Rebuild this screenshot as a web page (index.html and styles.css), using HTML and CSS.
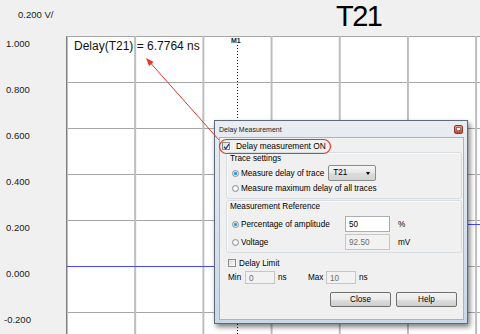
FILE: index.html
```html
<!DOCTYPE html>
<html lang="en">
<head>
<meta charset="UTF-8">
<meta name="viewport" content="width=device-width, initial-scale=1.0">
<title>Delay Measurement</title>
<link rel="stylesheet" href="styles.css">
</head>
<body>
<div id="scope">
  <div class="vdiv">0.200 V/</div>
  <div class="trace-name">T21</div>
  <div class="axis">
    <span>1.000</span>
    <span>0.800</span>
    <span>0.600</span>
    <span>0.400</span>
    <span>0.200</span>
    <span>0.000</span>
    <span class="neg">-0.200</span>
  </div>
  <div class="plot">
    <svg class="traces" width="414" height="298">
      <path d="M0 230.5 H300 V188.5 H414" stroke="#4646ff" fill="none"/>
      <line x1="170.5" y1="9" x2="170.5" y2="298" stroke="#111" stroke-dasharray="1 2"/>
    </svg>
    <span class="marker">M1</span>
    <span class="readout">Delay(T21) = 6.7764 ns</span>
  </div>
</div>

<div class="dialog">
  <div class="dialog-title">
    <span>Delay Measurement</span>
    <span class="close-btn"><span></span></span>
  </div>
  <div class="dialog-body">
    <div class="check-row main-check">
      <span class="checkbox">
        <svg width="7" height="7"><path d="M1 3.8 L2.8 5.8 L6 1" stroke="#22357a" stroke-width="1.3" fill="none"/></svg>
      </span>
      Delay measurement ON
    </div>

    <div class="group group-trace">
      <div class="group-label">Trace settings</div>
      <div class="opt-row tall">
        <span class="radio on"></span>
        <span>Measure delay of trace</span>
        <span class="select">T21<span class="caret"></span></span>
      </div>
      <div class="opt-row">
        <span class="radio"></span>
        <span>Measure maximum delay of all traces</span>
      </div>
    </div>

    <div class="group group-ref">
      <div class="group-label">Measurement Reference</div>
      <div class="opt-row tall">
        <span class="radio on"></span>
        <span class="opt-label">Percentage of amplitude</span>
        <span class="field">50</span>
        <span class="unit">%</span>
      </div>
      <div class="opt-row tall second">
        <span class="radio"></span>
        <span class="opt-label">Voltage</span>
        <span class="field off">92.50</span>
        <span class="unit">mV</span>
      </div>
    </div>

    <div class="check-row limit-check">
      <span class="checkbox"></span>
      Delay Limit
    </div>
    <div class="limit-row">
      <span class="lbl-min">Min</span>
      <span class="field off small">0</span>
      <span class="ns">ns</span>
      <span class="lbl-max">Max</span>
      <span class="field off small">10</span>
      <span class="ns">ns</span>
    </div>

    <div class="buttons">
      <span class="btn">Close</span>
      <span class="btn">Help</span>
    </div>
  </div>
</div>

<svg class="callout" width="480" height="334">
  <line x1="219" y1="140" x2="151" y2="63.5" stroke="#e4362c" stroke-width="1"/>
  <polygon points="146,58 153.6,61.9 149.1,66" fill="#e4362c"/>
  <rect x="219.5" y="139.5" width="111" height="14" rx="7" fill="none" stroke="#e4362c" stroke-width="1.2"/>
</svg>
</body>
</html>
```

FILE: styles.css
```css
html, body {
  margin: 0;
  width: 480px;
  height: 334px;
  overflow: hidden;
  background-color: #f0f0f0;
  font-family: "Liberation Sans", Arial, sans-serif;
  color: #1a1a1a;
}
body {
  position: relative;
}

/* scope window */
#scope {
  display: grid;
  grid-template-columns: 66px 1fr;
  grid-template-rows: 36px minmax(0, 1fr);
  height: 334px;
  overflow: hidden;
}
.vdiv {
  font-size: 9.5px;
  line-height: 12px;
  padding: 9px 0 0 18px;
}
.trace-name {
  font-size: 29px;
  line-height: 32px;
  letter-spacing: -1.5px;
  padding-left: 270px;
  color: #000;
}
.axis {
  display: flex;
  flex-direction: column;
  overflow: hidden;
  font-size: 9.5px;
  line-height: 12px;
}
.axis span {
  flex: none;
  height: 46px;
  box-sizing: border-box;
  padding: 2px 0 0 6px;
}
.axis span.neg {
  height: 22px;
  padding-left: 4px;
}
.plot {
  position: relative;
  overflow: hidden;
  background-color: #fff;
  background-image:
    linear-gradient(to right, #bdbdbd 2px, transparent 2px),
    linear-gradient(to bottom, #a6a6a6 1px, transparent 1px);
  background-size: 68.2px 100%, 100% 46px;
  background-position: -1px 0, 0 0;
  border-left: 1px solid #7f7f7f;
}
.traces {
  position: absolute;
  left: 0;
  top: 0;
}
.marker {
  position: absolute;
  left: 164px;
  top: 1px;
  font-size: 7px;
  line-height: 7px;
  font-weight: bold;
}
.readout {
  position: absolute;
  left: 7px;
  top: 3px;
  font-size: 12px;
  line-height: 14px;
  color: #111;
}

/* dialog */
.dialog {
  position: absolute;
  left: 214px;
  top: 120px;
  width: 254px;
  height: 204px;
  box-sizing: border-box;
  padding: 0 3px 3px 4px;
  border: 1px solid #5e6a78;
  background: linear-gradient(#e9edf2, #c8d7ea);
  box-shadow: 2px 3px 5px rgba(0, 0, 0, 0.5);
  font-size: 8.2px;
  color: #000;
  display: flex;
  flex-direction: column;
}
.dialog-title {
  height: 16px;
  display: flex;
  align-items: center;
  justify-content: space-between;
  font-size: 7px;
  color: #1c1c1c;
}
.close-btn {
  width: 9px;
  height: 9px;
  box-sizing: border-box;
  margin-right: 1px;
  border: 1px solid #8d3a2a;
  border-radius: 2px;
  background: linear-gradient(#eba08e, #c8442a);
  display: flex;
  align-items: center;
  justify-content: center;
}
.close-btn span {
  width: 3px;
  height: 2px;
  background: #fff;
  border: 1px solid #a86a60;
}
.dialog-body {
  flex: 1;
  border: 1px solid #a7b5c6;
  background-color: #f0f0f0;
  display: flex;
  flex-direction: column;
}

.check-row {
  display: flex;
  align-items: center;
  height: 12px;
}
.main-check {
  margin: 1px 0 0 2px;
  height: 14px;
  font-size: 8.4px;
}
.main-check .checkbox {
  margin-right: 6px;
}
.checkbox {
  width: 8px;
  height: 8px;
  box-sizing: border-box;
  border: 1px solid #8e8f8f;
  background: linear-gradient(135deg, #dcdcdc, #fbfbfb);
  display: flex;
  align-items: center;
  justify-content: center;
  margin-right: 3px;
}
.checkbox svg {
  display: block;
}

.group {
  margin: -1px 1px 0 6px;
  border: 1px solid #d8dde2;
  border-radius: 3px;
  box-shadow: inset 1px 1px 0 #fbfbfb;
  padding: 0 0 3px 3px;
}
.group-label {
  height: 11px;
  line-height: 12px;
}
.group-ref {
  margin-top: 1px;
  padding-bottom: 2px;
}
.group-ref .group-label {
  margin-bottom: 4px;
}
.opt-row {
  display: flex;
  align-items: center;
  height: 14px;
  padding-left: 2px;
}
.opt-row.tall {
  height: 16px;
}
.group-trace .opt-row.tall {
  margin-top: 1px;
}
.opt-row.second {
  margin-top: 2px;
}
.radio {
  width: 7px;
  height: 7px;
  box-sizing: border-box;
  border: 1px solid #8e8f8f;
  border-radius: 50%;
  background: radial-gradient(circle, #fdfdfd 30%, #d6d6d6 100%);
  margin-right: 2px;
}
.radio.on {
  background: radial-gradient(circle, #1f7fc4 0, #59b3e6 45%, #f4f4f4 60%, #d6d6d6 100%);
}
.opt-label {
  width: 104px;
}
.select {
  position: relative;
  width: 48px;
  height: 16px;
  box-sizing: border-box;
  margin-left: 4px;
  padding-left: 4px;
  border: 1px solid #8c8c8c;
  border-radius: 2px;
  background: linear-gradient(#f6f6f6, #e6e6e6 50%, #dcdcdc 51%, #d2d2d2);
  line-height: 14px;
}
.caret {
  position: absolute;
  right: 5px;
  top: 6px;
  border-top: 3px solid #000;
  border-left: 2px solid transparent;
  border-right: 2px solid transparent;
}
.field {
  width: 45px;
  height: 16px;
  box-sizing: border-box;
  border: 1px solid #abadb3;
  background: #fff;
  padding-left: 3px;
  line-height: 15px;
}
.field.off {
  background: #f2f2f2;
  border-color: #c6c6c6;
  color: #6d6d6d;
}
.field.small {
  width: 30px;
  height: 13px;
  line-height: 13px;
}
.unit {
  margin-left: 8px;
}

.limit-check {
  margin: 4px 0 0 8px;
}
.limit-row {
  display: flex;
  align-items: center;
  height: 13px;
  margin: 2px 0 0 8px;
}
.lbl-min {
  width: 17px;
}
.lbl-max {
  width: 18px;
}
.ns {
  width: 30px;
  margin-left: 3px;
}
.buttons {
  display: flex;
  justify-content: flex-end;
  gap: 5px;
  margin: 8px 6px 0 0;
}
.btn {
  width: 61px;
  height: 15px;
  box-sizing: border-box;
  border: 1px solid #707070;
  border-radius: 2px;
  background: linear-gradient(#f2f2f2, #ebebeb 50%, #dddddd 51%, #cfcfcf);
  text-align: center;
  line-height: 13px;
}

.callout {
  position: absolute;
  left: 0;
  top: 0;
  pointer-events: none;
}
```
